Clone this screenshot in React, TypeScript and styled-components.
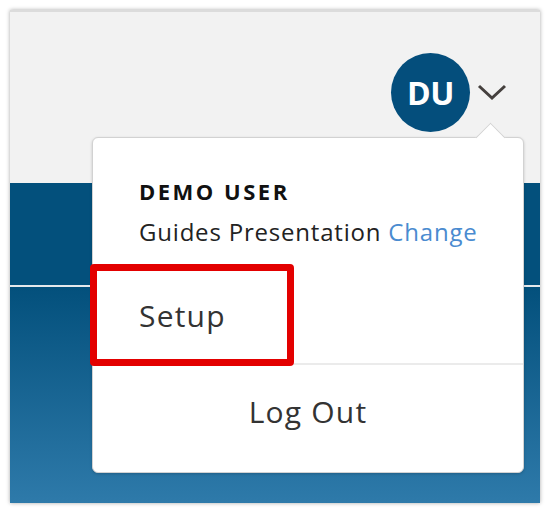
import React from 'react';
import styled, { createGlobalStyle } from 'styled-components';

const GlobalStyle = createGlobalStyle`
  body {
    margin: 0;
    background: #ffffff;
    font-family: 'Open Sans', 'Liberation Sans', sans-serif;
  }
`;

// 外框窗口
const Frame = styled.div`
  position: relative;
  margin: 10px;
  width: 530px;
  height: 493px;
  display: flex;
  flex-direction: column;
  box-shadow: 0 0 4px rgba(0, 0, 0, 0.35);
`;

const TopBar = styled.div`
  height: 173px;
  flex-shrink: 0;
  box-sizing: border-box;
  background: #f2f2f2;
  border-top: 2px solid #dcdcdc;
  display: flex;
  justify-content: flex-end;
  align-items: flex-start;
  padding: 41px 33px 0 0;
`;

const UserButton = styled.div`
  display: flex;
  align-items: center;
  gap: 7px;
`;

const Avatar = styled.div`
  width: 79px;
  height: 79px;
  border-radius: 50%;
  background: #044e7c;
  color: #ffffff;
  display: flex;
  align-items: center;
  justify-content: center;
  font-size: 32px;
  font-weight: 700;
  letter-spacing: -0.5px;
`;

const Band = styled.div`
  height: 102px;
  flex-shrink: 0;
  background: #03507c;
`;

const BandLine = styled.div`
  height: 2px;
  flex-shrink: 0;
  background: #e4e8ec;
`;

const Lower = styled.div`
  flex: 1;
  background: linear-gradient(180deg, #03507c 0%, #2e7aaa 100%);
`;

// 下拉菜单
const Menu = styled.div`
  position: absolute;
  top: 127px;
  left: 82px;
  width: 432px;
  height: 336px;
  box-sizing: border-box;
  background: #ffffff;
  border: 1px solid #d2d2d2;
  border-radius: 6px;
  box-shadow: 0 1px 3px rgba(0, 0, 0, 0.18);
  display: flex;
  flex-direction: column;

  &::before {
    content: '';
    position: absolute;
    top: -11px;
    left: 387px;
    width: 20px;
    height: 20px;
    background: #ffffff;
    border-top: 1px solid #d2d2d2;
    border-left: 1px solid #d2d2d2;
    transform: rotate(45deg);
  }
`;

const MenuHeader = styled.div`
  padding: 41px 46px 0;
  height: 127px;
  box-sizing: border-box;
  flex-shrink: 0;
`;

const UserName = styled.div`
  font-size: 22px;
  line-height: 24px;
  font-weight: 700;
  letter-spacing: 2.5px;
  color: #111111;
`;

const Presentation = styled.div`
  margin-top: 16px;
  font-size: 24px;
  line-height: 26px;
  letter-spacing: 0.8px;
  color: #222222;
  white-space: nowrap;
`;

const ChangeLink = styled.a`
  color: #4a8bd0;
  text-decoration: none;
`;

const MenuItem = styled.div<{ center?: boolean }>`
  display: flex;
  align-items: center;
  justify-content: ${({ center }) => (center ? 'center' : 'flex-start')};
  padding: ${({ center }) => (center ? '0 0 14px' : '2px 46px 0')};
  font-size: 30px;
  letter-spacing: 1.2px;
  color: #333333;
  position: relative;
`;

const SetupItem = styled(MenuItem)`
  height: 100px;
  flex-shrink: 0;
  box-sizing: border-box;
  border-bottom: 2px solid #ebebeb;
`;

const LogoutItem = styled(MenuItem)`
  flex: 1;
`;

// 红色标注框
const Highlight = styled.div`
  position: absolute;
  left: -3px;
  top: -1px;
  width: 204px;
  height: 102px;
  box-sizing: border-box;
  border: 7px solid #e30000;
  border-radius: 4px;
`;

const Chevron = () => (
  <svg width="30" height="17" viewBox="0 0 30 17" fill="none">
    <path d="M2 2 L15 14 L28 2" stroke="#45403e" strokeWidth="3" />
  </svg>
);

export default function App() {
  return (
    <>
      <GlobalStyle />
      <Frame>
        <TopBar>
          <UserButton>
            <Avatar>DU</Avatar>
            <Chevron />
          </UserButton>
        </TopBar>
        <Band />
        <BandLine />
        <Lower />
        <Menu>
          <MenuHeader>
            <UserName>DEMO USER</UserName>
            <Presentation>
              Guides Presentation <ChangeLink>Change</ChangeLink>
            </Presentation>
          </MenuHeader>
          <SetupItem>
            <Highlight />
            Setup
          </SetupItem>
          <LogoutItem center>Log Out</LogoutItem>
        </Menu>
      </Frame>
    </>
  );
}
